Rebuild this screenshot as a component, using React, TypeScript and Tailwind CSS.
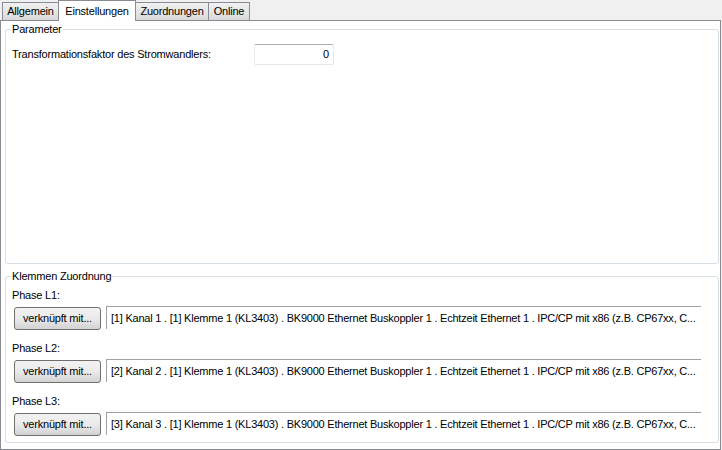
import React from 'react';

const tabs = [
  { label: 'Allgemein', w: 'w-[57px]', active: false },
  { label: 'Einstellungen', w: 'w-[78px]', active: true },
  { label: 'Zuordnungen', w: 'w-[74px]', active: false },
  { label: 'Online', w: 'w-[42px]', active: false },
];

const phases = [
  {
    label: 'Phase L1:',
    text: '[1] Kanal 1 . [1] Klemme 1 (KL3403) . BK9000 Ethernet Buskoppler 1 . Echtzeit Ethernet 1 . IPC/CP mit x86 (z.B. CP67xx, C...',
  },
  {
    label: 'Phase L2:',
    text: '[2] Kanal 2 . [1] Klemme 1 (KL3403) . BK9000 Ethernet Buskoppler 1 . Echtzeit Ethernet 1 . IPC/CP mit x86 (z.B. CP67xx, C...',
  },
  {
    label: 'Phase L3:',
    text: '[3] Kanal 3 . [1] Klemme 1 (KL3403) . BK9000 Ethernet Buskoppler 1 . Echtzeit Ethernet 1 . IPC/CP mit x86 (z.B. CP67xx, C...',
  },
];

const App = () => {
  return (
    <div className="w-[722px] h-[450px] bg-[#f0f0f0] font-['Liberation_Sans_Narrow','Liberation_Sans',Arial,sans-serif] text-[11px] tracking-[-0.2px] leading-[13px] text-black overflow-hidden">
      {/* Tab strip */}
      <div className="h-[20px] flex items-end pl-[2px]">
        {tabs.map((t) =>
          t.active ? (
            <div
              key={t.label}
              className={`${t.w} h-[21px] -mb-px -ml-px relative z-10 bg-white border border-b-0 border-[#898c95] flex items-center justify-center`}
            >
              {t.label}
            </div>
          ) : (
            <div
              key={t.label}
              className={`${t.w} h-[18px] -ml-px first:ml-0 border border-b-0 border-[#898c95] bg-gradient-to-b from-[#f2f2f2] to-[#d9d9d9] flex items-center justify-center`}
            >
              {t.label}
            </div>
          )
        )}
      </div>

      {/* Tab page */}
      <div className="w-[721px] h-[430px] bg-white border border-[#898c95] pt-[2px] pl-[4px]">
        <fieldset className="w-[714px] h-[241px] border border-[#d5dfe5] rounded-[3px] px-0">
          <legend className="ml-[5px] px-[1px]">Parameter</legend>
          <div className="flex items-center pl-[6px] mt-[8px]">
            <div className="w-[242px]">Transformationsfaktor des Stromwandlers:</div>
            <div className="w-[80px] h-[21px] border border-[#e3e9ef] border-t-[#abadb3] rounded-[2px] flex items-center justify-end pr-[4px]">
              0
            </div>
          </div>
        </fieldset>

        <fieldset className="w-[714px] h-[173px] mt-[6px] border border-[#d5dfe5] rounded-[3px] px-0">
          <legend className="ml-[5px] px-[1px]">Klemmen Zuordnung</legend>
          <div className="flex flex-col gap-[12px] mt-[6px]">
            {phases.map((p) => (
              <div key={p.label} className="flex flex-col">
                <div className="pl-[6px]">{p.label}</div>
                <div className="flex items-start mt-[5px] pl-[8px]">
                  <button className="w-[87px] h-[23px] border border-[#707070] rounded-[3px] bg-gradient-to-b from-[#f2f2f2] via-[#ebebeb] to-[#d2d2d2] flex items-center justify-center">
                    verknüpft mit...
                  </button>
                  <div className="ml-[5px] w-[595px] h-[23px] -mt-px border-l border-t border-[#a0a0a0] pl-[4px] pt-[5px] whitespace-nowrap overflow-hidden tracking-[-0.22px]">
                    {p.text}
                  </div>
                </div>
              </div>
            ))}
          </div>
        </fieldset>
      </div>
    </div>
  );
};

export default App;
